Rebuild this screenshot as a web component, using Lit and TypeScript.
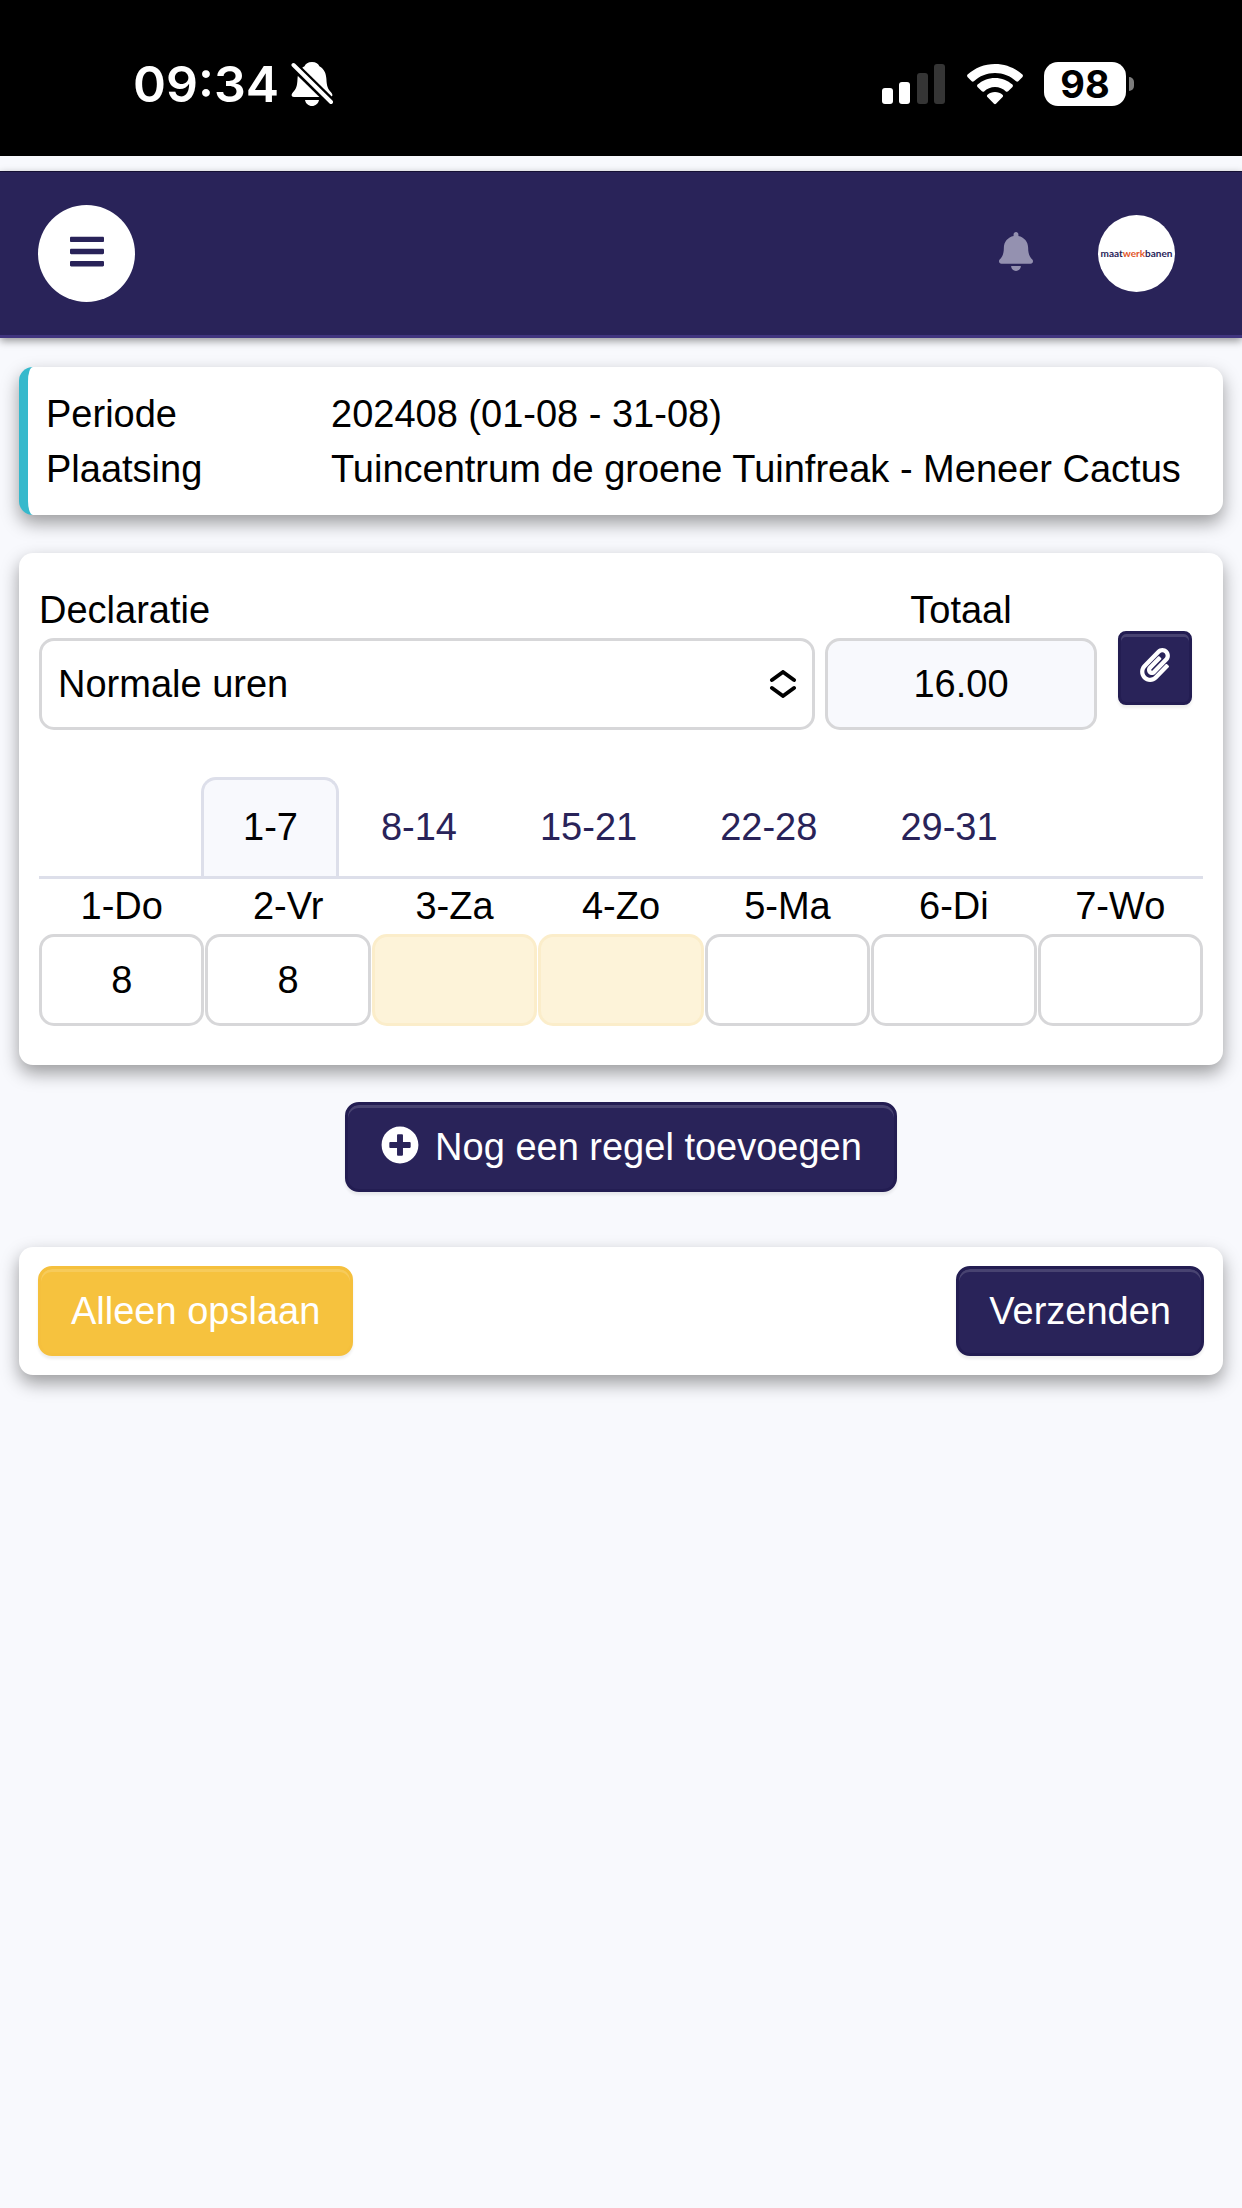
import { LitElement, html, css, svg } from "lit";
import { customElement, state } from "lit/decorators.js";

interface Day {
  label: string;
  hours: string;
  weekend: boolean;
}

const WEEKS = ["1-7", "8-14", "15-21", "22-28", "29-31"];

const DAYS: Day[] = [
  { label: "1-Do", hours: "8", weekend: false },
  { label: "2-Vr", hours: "8", weekend: false },
  { label: "3-Za", hours: "", weekend: true },
  { label: "4-Zo", hours: "", weekend: true },
  { label: "5-Ma", hours: "", weekend: false },
  { label: "6-Di", hours: "", weekend: false },
  { label: "7-Wo", hours: "", weekend: false },
];

const barsPath = svg`<path d="M16 132h416c8.837 0 16-7.163 16-16V76c0-8.837-7.163-16-16-16H16C7.163 60 0 67.163 0 76v40c0 8.837 7.163 16 16 16zm0 160h416c8.837 0 16-7.163 16-16v-40c0-8.837-7.163-16-16-16H16c-8.837 0-16 7.163-16 16v40c0 8.837 7.163 16 16 16zm0 160h416c8.837 0 16-7.163 16-16v-40c0-8.837-7.163-16-16-16H16c-8.837 0-16 7.163-16 16v40c0 8.837 7.163 16 16 16z"/>`;

const bellPath = svg`<path d="M224 512c35.32 0 63.97-28.65 63.97-64H160.03c0 35.35 28.65 64 63.97 64zm215.39-149.71c-19.32-20.76-55.47-51.99-55.47-154.29 0-77.7-54.48-139.9-127.94-155.16V32c0-17.67-14.32-32-31.98-32s-31.98 14.33-31.98 32v20.84C118.56 68.1 64.08 130.3 64.08 208c0 102.3-36.15 133.53-55.47 154.29-6 6.45-8.66 14.16-8.61 21.71.11 16.4 12.98 32 32.1 32h383.8c19.12 0 32-15.6 32.1-32 .05-7.55-2.61-15.27-8.61-21.71z"/>`;

const clipPath = svg`<path d="M43.246 466.142c-58.43-60.289-57.341-157.511 1.386-217.581L254.392 34c44.316-45.332 116.351-45.336 160.671 0 43.89 44.894 43.943 117.329 0 162.276L232.214 383.128c-29.855 30.537-78.633 30.111-107.982-.998-28.275-29.97-27.368-77.473 1.452-106.953l143.743-146.835c6.182-6.314 16.312-6.422 22.626-.241l22.861 22.379c6.315 6.182 6.422 16.312.241 22.626L171.427 319.927c-4.932 5.045-5.236 13.428-.648 18.292 4.372 4.634 11.245 4.711 15.688.165l182.849-186.851c19.613-20.062 19.613-52.725-.011-72.798-19.189-19.627-49.957-19.637-69.154 0L90.39 293.295c-34.763 35.56-35.299 93.12-1.191 128.313 34.01 35.093 88.985 35.137 123.058.286l172.06-175.999c6.177-6.319 16.307-6.433 22.626-.256l22.877 22.364c6.319 6.177 6.434 16.307.256 22.626l-172.06 175.998c-59.576 60.938-155.943 60.216-214.77-.485z"/>`;

const plusCirclePath = svg`<path d="M256 8C119 8 8 119 8 256s111 248 248 248 248-111 248-248S393 8 256 8zm144 276c0 6.6-5.4 12-12 12h-92v92c0 6.6-5.4 12-12 12h-56c-6.6 0-12-5.4-12-12v-92h-92c-6.6 0-12-5.4-12-12v-56c0-6.6 5.4-12 12-12h92v-92c0-6.6 5.4-12 12-12h56c6.6 0 12 5.4 12 12v92h92c6.6 0 12 5.4 12 12v56z"/>`;

@customElement("status-bar")
export class StatusBar extends LitElement {
  static styles = css`
    :host {
      display: flex;
      justify-content: space-between;
      align-items: center;
      box-sizing: border-box;
      height: 156px;
      padding: 11px 108px 0 133px;
      background: #000;
      color: #fff;
      font-family: Inter, "Liberation Sans", sans-serif;
      font-weight: 600;
    }
    .side {
      display: flex;
      align-items: center;
    }
    .clock {
      font-size: 50px;
      line-height: 60px;
    }
    .muted {
      width: 42px;
      height: 46px;
      margin-left: 12px;
    }
    .signal {
      width: 64px;
      height: 40px;
    }
    .wifi {
      width: 58px;
      height: 42px;
      margin-left: 20px;
    }
    .battery {
      display: flex;
      align-items: center;
      gap: 3px;
      margin-left: 20px;
    }
    .level {
      width: 82px;
      height: 44px;
      border-radius: 14px;
      background: #fff;
      color: #000;
      font-size: 38px;
      font-weight: 700;
      line-height: 44px;
      text-align: center;
    }
    .cap {
      width: 5px;
      height: 14px;
      border-radius: 0 6px 6px 0;
      background: #7d7d7d;
    }
  `;

  render() {
    return html`
      <div class="side">
        <span class="clock">09:34</span>
        <svg class="muted" viewBox="0 0 42 46" aria-hidden="true">
          <path
            fill="#fff"
            d="M21 1C17 1 14.500 3 13.500 5.200 8.800 8 6.800 12 6.500 18c-.3 7-1.300 10.200-4.500 13.200C-.2 33.400.2 36 3 36h36c2.800 0 3.200-2.600 1-4.800C36.800 28.200 35.700 25 35.400 18c-.3-6-2.300-10-7-12.800C27.400 3 25 1 21 1zM14 39h14c-.6 3.600-3.600 6-7 6s-6.400-2.400-7-6z"
          />
          <path d="M-2 0 43 44" stroke="#000" stroke-width="9" />
          <path d="M2.500 4 40 41" stroke="#fff" stroke-width="4" stroke-linecap="round" />
        </svg>
      </div>
      <div class="side">
        <svg class="signal" viewBox="0 0 64 40" aria-hidden="true">
          <rect x="0" y="24" width="11" height="16" rx="3" fill="#fff" />
          <rect x="17" y="18" width="11" height="22" rx="3" fill="#fff" />
          <rect x="35" y="9" width="11" height="31" rx="3" fill="#353535" />
          <rect x="52" y="0" width="11" height="40" rx="3" fill="#353535" />
        </svg>
        <svg class="wifi" viewBox="0 0 58 42" aria-hidden="true">
          <g fill="#fff">
            <path d="M29 1C18.500 1 8.800 5 1.600 11.600c-.7.7-.7 1.600-.1 2.300l4.200 4.300c.6.6 1.500.6 2.200 0C13.500 13.100 20.900 10 29 10s15.500 3.100 21.100 8.200c.7.6 1.600.6 2.200 0l4.200-4.300c.6-.7.6-1.600-.1-2.300C49.200 5 39.500 1 29 1z" />
            <path d="M29 15c-6.700 0-12.800 2.500-17.400 6.600-.7.7-.7 1.600-.1 2.300l4.400 4.400c.6.6 1.500.6 2.200.1C21 25.700 24.800 24 29 24s8 1.700 10.900 4.400c.7.5 1.600.5 2.200-.1l4.400-4.400c.6-.7.6-1.600-.1-2.300C41.800 17.500 35.700 15 29 15z" />
            <path d="M29 29c-2.900 0-5.500 1-7.500 2.800-.8.7-.7 1.600-.1 2.200l6.600 6.700c.6.600 1.400.6 2 0l6.600-6.700c.6-.6.7-1.500-.1-2.200C34.500 30 31.900 29 29 29z" />
          </g>
        </svg>
        <div class="battery">
          <div class="level">98</div>
          <div class="cap"></div>
        </div>
      </div>
    `;
  }
}

@customElement("app-header")
export class AppHeader extends LitElement {
  static styles = css`
    :host {
      display: flex;
      align-items: center;
      box-sizing: border-box;
      height: 167px;
      padding: 0 67px 0 38px;
      background: #292359;
      border-top: 1px solid #151033;
      border-bottom: 3px solid #41357f;
      box-shadow: 0 3px 8px rgba(0, 0, 0, 0.4);
    }
    button {
      display: flex;
      align-items: center;
      justify-content: center;
      padding: 0;
      border: 0;
      background: none;
    }
    .menu {
      width: 97px;
      height: 97px;
      padding-bottom: 4px;
      border-radius: 50%;
      background: #fff;
      fill: #292359;
    }
    .menu svg {
      width: 34px;
      height: 39px;
    }
    .alerts {
      margin-left: auto;
      padding-bottom: 4px;
      fill: #9491b0;
    }
    .alerts svg {
      width: 34px;
      height: 39px;
    }
    .avatar {
      display: flex;
      align-items: center;
      justify-content: center;
      width: 77px;
      height: 77px;
      margin-left: 65px;
      border-radius: 50%;
      background: #fff;
      color: #292359;
      font-family: Lato, "Liberation Sans", sans-serif;
      font-size: 10px;
      font-weight: 700;
      text-decoration: none;
    }
    .accent {
      color: #e2572b;
    }
  `;

  render() {
    return html`
      <button class="menu" type="button" aria-label="Menu">
        <svg viewBox="0 0 448 512" aria-hidden="true">${barsPath}</svg>
      </button>
      <button class="alerts" type="button" aria-label="Meldingen">
        <svg viewBox="0 0 448 512" aria-hidden="true">${bellPath}</svg>
      </button>
      <a class="avatar" href="#"><span>maat<span class="accent">werk</span>banen</span></a>
    `;
  }
}

@customElement("app-root")
export class AppRoot extends LitElement {
  @state() private week = 0;

  static styles = css`
    :host {
      display: block;
      min-height: 100vh;
      background: #f8f9fd;
      color: #000;
      font-family: "Liberation Sans", Arial, sans-serif;
      font-size: 38px;
      line-height: 55px;
    }
    app-header {
      margin-top: 15px;
    }
    main {
      padding: 29px 19px;
    }
    .card {
      border-radius: 14px;
      background: #fff;
      box-shadow: 0 8px 18px rgba(0, 0, 0, 0.38);
    }
    .summary {
      display: grid;
      grid-template-columns: 285px 1fr;
      margin: 0;
      padding: 20px 0 18px 18px;
      border-left: 9px solid #36b9cc;
    }
    .summary dt,
    .summary dd {
      margin: 0;
      white-space: nowrap;
    }
    .entry {
      margin-top: 38px;
      padding: 30px 20px 39px;
    }
    .claim {
      display: flex;
      align-items: flex-end;
      padding-right: 11px;
    }
    .field {
      display: flex;
      flex-direction: column;
    }
    .kind {
      flex: 1;
    }
    .total {
      width: 272px;
      margin: 0 21px 0 10px;
      text-align: center;
    }
    .picker {
      position: relative;
      display: flex;
    }
    .caret {
      position: absolute;
      top: 32px;
      right: 18px;
      width: 28px;
      height: 28px;
      fill: none;
      stroke: #000;
      stroke-width: 4;
      stroke-linecap: round;
      stroke-linejoin: round;
      pointer-events: none;
    }
    input,
    select {
      box-sizing: border-box;
      width: 100%;
      height: 92px;
      margin: 0;
      padding: 0 16px;
      border: 3px solid #d7d7d9;
      border-radius: 15px;
      background: #fff;
      color: #000;
      font: inherit;
      appearance: none;
    }
    input {
      text-align: center;
    }
    .total input {
      background: #f8f9fd;
    }
    button {
      display: flex;
      align-items: center;
      justify-content: center;
      box-sizing: border-box;
      height: 90px;
      padding: 0 30px;
      border: 3px solid #231d52;
      border-radius: 14px;
      background: #292359;
      box-shadow: inset 0 3px 0 rgba(255, 255, 255, 0.15), 0 3px 3px rgba(0, 0, 0, 0.07);
      color: #fff;
      font: inherit;
    }
    button svg {
      fill: #fff;
    }
    .attach {
      width: 74px;
      height: 74px;
      margin-bottom: 25px;
      padding: 0 0 6px;
      border-radius: 8px;
    }
    .attach svg {
      width: 30px;
      height: 34px;
    }
    .weeks {
      display: flex;
      margin-top: 47px;
      padding-left: 162px;
      border-bottom: 3px solid #dddfea;
    }
    .week {
      padding: 20px 38px 21px 39px;
      border: 3px solid transparent;
      border-bottom: 0;
      border-radius: 15px 15px 0 0;
      color: #292359;
      text-decoration: none;
    }
    .week.active {
      border-color: #dddfea;
      background: #f8f9fd;
      color: #000;
    }
    .days {
      display: grid;
      grid-template-columns: repeat(7, 1fr);
      column-gap: 1px;
      text-align: center;
    }
    .weekend {
      border-color: #fbedca;
      background: #fdf3d9;
    }
    .add {
      margin: 37px auto 0;
      padding: 0 32px 0 33px;
    }
    .add svg {
      width: 38px;
      height: 38px;
      margin: 0 16px 4px 0;
    }
    .actions {
      display: flex;
      justify-content: space-between;
      margin-top: 55px;
      padding: 19px;
    }
    .save {
      border-color: #f5c03d;
      background: #f6c23e;
    }
  `;

  render() {
    return html`
      <status-bar></status-bar>
      <app-header></app-header>
      <main>
        <dl class="card summary">
          <dt>Periode</dt>
          <dd>202408 (01-08 - 31-08)</dd>
          <dt>Plaatsing</dt>
          <dd>Tuincentrum de groene Tuinfreak - Meneer Cactus</dd>
        </dl>

        <section class="card entry">
          <div class="claim">
            <div class="field kind">
              <label for="kind">Declaratie</label>
              <div class="picker">
                <select id="kind">
                  <option>Normale uren</option>
                </select>
                <svg class="caret" viewBox="0 0 28 28" aria-hidden="true">
                  <path d="M3 10 14 2 25 10M3 18 14 26 25 18" />
                </svg>
              </div>
            </div>
            <div class="field total">
              <label for="total">Totaal</label>
              <input id="total" type="text" value="16.00" readonly />
            </div>
            <button class="attach" type="button" aria-label="Bijlage">
              <svg viewBox="0 0 448 512" aria-hidden="true">${clipPath}</svg>
            </button>
          </div>

          <nav class="weeks">
            ${WEEKS.map(
              (label, index) => html`<a
                class="week ${index === this.week ? "active" : ""}"
                href="#"
                @click=${(event: Event) => this.pickWeek(event, index)}
                >${label}</a
              >`
            )}
          </nav>

          <div class="days">
            ${DAYS.map(
              (day, index) => html`<div class="field">
                <label for="day-${index}">${day.label}</label>
                <input
                  id="day-${index}"
                  class=${day.weekend ? "weekend" : ""}
                  type="text"
                  inputmode="decimal"
                  .value=${day.hours}
                />
              </div>`
            )}
          </div>
        </section>

        <button class="add" type="button">
          <svg viewBox="0 0 512 512" aria-hidden="true">${plusCirclePath}</svg>
          Nog een regel toevoegen
        </button>

        <section class="card actions">
          <button class="save" type="button">Alleen opslaan</button>
          <button type="submit">Verzenden</button>
        </section>
      </main>
    `;
  }

  private pickWeek(event: Event, index: number) {
    event.preventDefault();
    this.week = index;
  }
}
